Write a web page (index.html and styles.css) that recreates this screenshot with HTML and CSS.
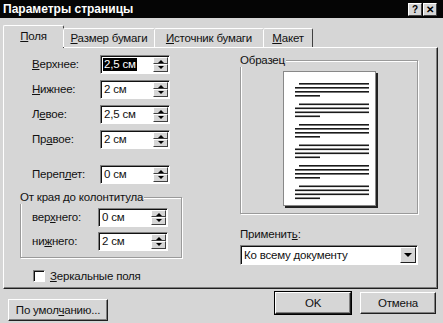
FILE: index.html
```html
<!DOCTYPE html>
<html lang="ru">
<head>
    <meta charset="UTF-8">
    <title>Параметры страницы</title>
    <link rel="stylesheet" href="styles.css">
</head>
<body>
    <div class="window">
        <div class="titlebar">
            <span class="title">Параметры страницы</span>
            <div class="cap-btns">
                <span class="cap-btn">?</span>
                <span class="cap-btn">&#x2715;</span>
            </div>
        </div>

        <div class="dialog">
            <div class="tabs">
                <div class="tab tab-active tab-fields"><u>П</u>оля</div>
                <div class="tab tab-paper"><u>Р</u>азмер бумаги</div>
                <div class="tab tab-source"><u>И</u>сточник бумаги</div>
                <div class="tab tab-layout"><u>М</u>акет</div>
            </div>

            <div class="panel">
                <div class="left-col">
                    <div class="field">
                        <span class="label"><u>В</u>ерхнее:</span>
                        <div class="spin">
                            <span class="spin-value selected">2,5 см</span>
                            <div class="spin-btns"><span class="spin-up"></span><span class="spin-down"></span></div>
                        </div>
                    </div>
                    <div class="field">
                        <span class="label"><u>Н</u>ижнее:</span>
                        <div class="spin">
                            <span class="spin-value">2 см</span>
                            <div class="spin-btns"><span class="spin-up"></span><span class="spin-down"></span></div>
                        </div>
                    </div>
                    <div class="field">
                        <span class="label">Л<u>е</u>вое:</span>
                        <div class="spin">
                            <span class="spin-value">2,5 см</span>
                            <div class="spin-btns"><span class="spin-up"></span><span class="spin-down"></span></div>
                        </div>
                    </div>
                    <div class="field">
                        <span class="label">Пр<u>а</u>вое:</span>
                        <div class="spin">
                            <span class="spin-value">2 см</span>
                            <div class="spin-btns"><span class="spin-up"></span><span class="spin-down"></span></div>
                        </div>
                    </div>
                    <div class="field field-gutter">
                        <span class="label">Переп<u>л</u>ет:</span>
                        <div class="spin">
                            <span class="spin-value">0 см</span>
                            <div class="spin-btns"><span class="spin-up"></span><span class="spin-down"></span></div>
                        </div>
                    </div>

                    <fieldset class="group">
                        <legend>От края до колонтитула</legend>
                        <div class="field">
                            <span class="label label-inner">вер<u>х</u>него:</span>
                            <div class="spin">
                                <span class="spin-value">0 см</span>
                                <div class="spin-btns"><span class="spin-up"></span><span class="spin-down"></span></div>
                            </div>
                        </div>
                        <div class="field">
                            <span class="label label-inner">ни<u>ж</u>него:</span>
                            <div class="spin">
                                <span class="spin-value">2 см</span>
                                <div class="spin-btns"><span class="spin-up"></span><span class="spin-down"></span></div>
                            </div>
                        </div>
                    </fieldset>

                    <div class="check">
                        <span class="check-box"></span>
                        <span><u>З</u>еркальные поля</span>
                    </div>
                </div>

                <div class="right-col">
                    <fieldset class="sample">
                        <legend>Образец</legend>
                        <div class="page">
                            <svg width="91" height="133" viewBox="0 0 91 133">
                                <g fill="#1a1a1a">
                                    <rect x="15" y="11" width="70" height="1.6"/>
                                    <rect x="11" y="15" width="74" height="1.6"/>
                                    <rect x="11" y="19" width="74" height="1.6"/>
                                    <rect x="11" y="23" width="25" height="1.6"/>

                                    <rect x="15" y="31.5" width="70" height="1.6"/>
                                    <rect x="11" y="35.5" width="74" height="1.6"/>
                                    <rect x="11" y="39.5" width="74" height="1.6"/>
                                    <rect x="11" y="43.5" width="25" height="1.6"/>

                                    <rect x="15" y="52" width="70" height="1.6"/>
                                    <rect x="11" y="56" width="74" height="1.6"/>
                                    <rect x="11" y="60" width="74" height="1.6"/>
                                    <rect x="11" y="64" width="25" height="1.6"/>

                                    <rect x="15" y="72.5" width="70" height="1.6"/>
                                    <rect x="11" y="76.5" width="74" height="1.6"/>
                                    <rect x="11" y="80.5" width="74" height="1.6"/>
                                    <rect x="11" y="84.5" width="25" height="1.6"/>

                                    <rect x="15" y="93" width="70" height="1.6"/>
                                    <rect x="11" y="97" width="74" height="1.6"/>
                                    <rect x="11" y="101" width="74" height="1.6"/>
                                    <rect x="11" y="105" width="25" height="1.6"/>

                                    <rect x="15" y="113.5" width="70" height="1.6"/>
                                    <rect x="11" y="117.5" width="74" height="1.6"/>
                                    <rect x="11" y="121.5" width="74" height="1.6"/>
                                    <rect x="11" y="125.5" width="25" height="1.6"/>
                                </g>
                            </svg>
                        </div>
                    </fieldset>

                    <div class="apply-label">Применит<u>ь</u>:</div>
                    <div class="combo">
                        <span class="combo-value">Ко всему документу</span>
                        <span class="combo-btn"><span class="combo-arrow"></span></span>
                    </div>
                </div>
            </div>

            <div class="buttons">
                <button class="btn btn-default-values">По умол<u>ч</u>анию...</button>
                <div class="buttons-right">
                    <button class="btn btn-ok">OK</button>
                    <button class="btn">Отмена</button>
                </div>
            </div>
        </div>
    </div>
</body>
</html>
```

FILE: styles.css
```css
body {
    margin: 0;
    font-family: "Liberation Sans", Arial, sans-serif;
    font-size: 11.5px;
    letter-spacing: -0.2px;
    color: #111;
}

.window {
    width: 443px;
    height: 323px;
    background-color: #d6d6d6;
    overflow: hidden;
}

/* title bar */
.titlebar {
    height: 18px;
    background-color: #050505;
    display: flex;
    align-items: center;
    justify-content: space-between;
    padding: 0 6px 0 3px;
}

.title {
    color: #fff;
    font-weight: bold;
    font-size: 12px;
    letter-spacing: 0;
}

.cap-btns {
    display: flex;
    gap: 1px;
}

.cap-btn {
    width: 14px;
    height: 13px;
    background-color: #d6d6d6;
    border-top: 1px solid #fff;
    border-left: 1px solid #fff;
    border-right: 1px solid #404040;
    border-bottom: 1px solid #404040;
    box-sizing: border-box;
    font-size: 10px;
    font-weight: bold;
    line-height: 11px;
    text-align: center;
    color: #000;
}

/* tabs */
.dialog {
    padding: 7px 5px 0 3px;
}

.tabs {
    display: flex;
    align-items: flex-end;
    height: 22px;
    position: relative;
    z-index: 1;
}

.tab {
    height: 19px;
    line-height: 19px;
    text-align: center;
    border-top: 1px solid #fff;
    border-left: 1px solid #fff;
    border-right: 1px solid #404040;
    border-radius: 2px 2px 0 0;
    box-sizing: border-box;
    margin-left: -1px;
}

.tab-active {
    height: 23px;
    line-height: 21px;
    margin-bottom: -1px;
    background-color: #d6d6d6;
    margin-left: 0;
}

.tab-fields { width: 61px; }
.tab-paper { width: 92px; }
.tab-source { width: 110px; }
.tab-layout { width: 50px; }

/* main panel */
.panel {
    height: 242px;
    box-sizing: border-box;
    border-top: 1px solid #fff;
    border-left: 1px solid #fff;
    border-right: 1px solid #202020;
    border-bottom: 1px solid #202020;
    box-shadow: inset -1px -1px 0 #808080;
    display: flex;
    justify-content: space-between;
    padding: 7px 19px 0 16px;
}

.left-col {
    width: 162px;
}

.field {
    display: flex;
    align-items: center;
    height: 18px;
    margin-bottom: 7px;
    padding-left: 12px;
}

.field-gutter {
    margin-top: 17px;
    margin-bottom: 0;
}

.label {
    width: 68px;
}

.label-inner {
    width: 66px;
}

.spin {
    width: 70px;
    height: 19px;
    box-sizing: border-box;
    background-color: #fff;
    border-top: 1px solid #808080;
    border-left: 1px solid #808080;
    border-right: 1px solid #fff;
    border-bottom: 1px solid #fff;
    box-shadow: inset 1px 1px 0 #101010;
    display: flex;
    align-items: center;
    justify-content: space-between;
    padding: 1px 1px 1px 2px;
}

.spin-value {
    line-height: 13px;
    padding: 0 1px;
}

.selected {
    background-color: #000;
    color: #fff;
}

.spin-btns {
    display: flex;
    flex-direction: column;
    width: 15px;
    height: 15px;
}

.spin-up,
.spin-down {
    flex: 1;
    background-color: #d6d6d6;
    border-top: 1px solid #fff;
    border-left: 1px solid #fff;
    border-right: 1px solid #404040;
    border-bottom: 1px solid #404040;
    position: relative;
}

.spin-up::after,
.spin-down::after {
    content: "";
    position: absolute;
    left: 4px;
    top: 2px;
    border-left: 3px solid transparent;
    border-right: 3px solid transparent;
}

.spin-up::after {
    border-bottom: 3px solid #000;
}

.spin-down::after {
    top: 1px;
    border-top: 3px solid #000;
}

/* etched groups */
.group,
.sample {
    margin: 0;
    border: 1px solid #9a9a9a;
    box-shadow: 1px 1px 0 #fff, inset 1px 1px 0 #fff;
}

.group legend,
.sample legend {
    padding: 0 1px;
    margin-left: -2px;
    line-height: 14px;
    background-color: #d6d6d6;
}

.group {
    margin-top: 7px;
    padding: 4px 0 7px 0;
}

.group .field {
    padding-left: 11px;
    margin-bottom: 6px;
}

.group .field:last-of-type {
    margin-bottom: 0;
}

.check {
    display: flex;
    align-items: center;
    gap: 5px;
    margin-top: 12px;
    padding-left: 13px;
}

.check-box {
    width: 12px;
    height: 12px;
    box-sizing: border-box;
    background-color: #fff;
    border-top: 1px solid #808080;
    border-left: 1px solid #808080;
    border-right: 1px solid #fff;
    border-bottom: 1px solid #fff;
    box-shadow: inset 1px 1px 0 #101010;
}

/* right column */
.right-col {
    width: 178px;
    margin-top: -2px;
}

.sample {
    padding: 4px 0 7px 0;
    display: flex;
    justify-content: center;
}

.page {
    width: 91px;
    height: 133px;
    background-color: #fff;
    border: 1px solid #888;
    box-shadow: 2px 2px 0 #222;
}

.page svg {
    display: block;
}

.apply-label {
    margin-top: 13px;
    line-height: 14px;
}

.combo {
    margin-top: 4px;
    height: 20px;
    box-sizing: border-box;
    background-color: #fff;
    border-top: 1px solid #808080;
    border-left: 1px solid #808080;
    border-right: 1px solid #fff;
    border-bottom: 1px solid #fff;
    box-shadow: inset 1px 1px 0 #101010;
    display: flex;
    align-items: center;
    justify-content: space-between;
    padding: 1px 1px 1px 3px;
}

.combo-btn {
    width: 16px;
    height: 16px;
    box-sizing: border-box;
    background-color: #d6d6d6;
    border-top: 1px solid #fff;
    border-left: 1px solid #fff;
    border-right: 1px solid #202020;
    border-bottom: 1px solid #202020;
    display: flex;
    align-items: center;
    justify-content: center;
}

.combo-arrow {
    border-left: 4px solid transparent;
    border-right: 4px solid transparent;
    border-top: 4px solid #000;
}

/* bottom buttons */
.buttons {
    display: flex;
    justify-content: space-between;
    align-items: flex-start;
    padding: 3px 2px 0 5px;
}

.buttons-right {
    display: flex;
    gap: 9px;
}

.btn {
    font-family: "Liberation Sans", Arial, sans-serif;
    font-size: 11.5px;
    letter-spacing: -0.2px;
    color: #111;
    height: 22px;
    width: 76px;
    padding: 0;
    background-color: #d6d6d6;
    border-top: 1px solid #fff;
    border-left: 1px solid #fff;
    border-right: 1px solid #202020;
    border-bottom: 1px solid #202020;
    box-shadow: inset -1px -1px 0 #808080;
}

.btn-default-values {
    width: 100px;
    margin-top: 7px;
}

.btn-ok {
    outline: 1px solid #000;
}
```
